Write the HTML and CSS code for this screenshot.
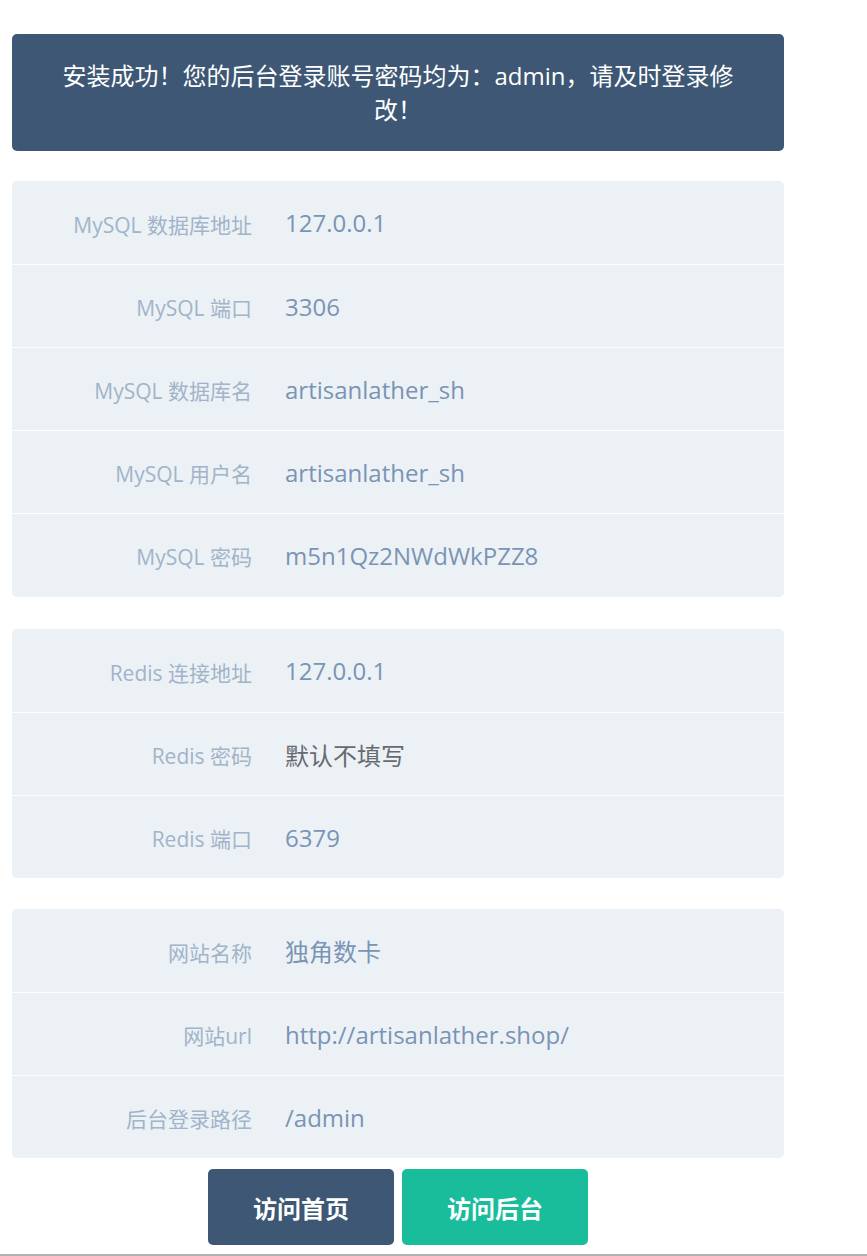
FILE: index.html
```html
<!DOCTYPE html>
<html lang="zh-CN">
<head>
<meta charset="utf-8">
<title>安装成功</title>
<link rel="stylesheet" href="styles.css">
</head>
<body>
<div class="wrap">
  <div class="banner">安装成功！您的后台登录账号密码均为：admin，请及时登录修改！</div>

  <div class="card card-mysql">
    <div class="row"><div class="label">MySQL 数据库地址</div><div class="value">127.0.0.1</div></div>
    <div class="row"><div class="label">MySQL 端口</div><div class="value">3306</div></div>
    <div class="row"><div class="label">MySQL 数据库名</div><div class="value">artisanlather_sh</div></div>
    <div class="row"><div class="label">MySQL 用户名</div><div class="value">artisanlather_sh</div></div>
    <div class="row"><div class="label">MySQL 密码</div><div class="value">m5n1Qz2NWdWkPZZ8</div></div>
  </div>

  <div class="card card-redis">
    <div class="row"><div class="label">Redis 连接地址</div><div class="value">127.0.0.1</div></div>
    <div class="row"><div class="label">Redis 密码</div><div class="value muted">默认不填写</div></div>
    <div class="row"><div class="label">Redis 端口</div><div class="value">6379</div></div>
  </div>

  <div class="card card-site">
    <div class="row"><div class="label">网站名称</div><div class="value">独角数卡</div></div>
    <div class="row"><div class="label">网站url</div><div class="value">http://artisanlather.shop/</div></div>
    <div class="row"><div class="label">后台登录路径</div><div class="value">/admin</div></div>
  </div>

  <div class="actions">
    <a class="btn btn-dark" href="#">访问首页</a>
    <a class="btn btn-teal" href="#">访问后台</a>
  </div>
</div>
<div class="bottom-rule"></div>
</body>
</html>
```

FILE: styles.css
```css
html, body {
  margin: 0;
  padding: 0;
  background: #ffffff;
}
body {
  font-family: "Open Sans", "Noto Sans CJK SC", sans-serif;
}
.wrap {
  width: 772px;
  margin: 34px 0 0 12px;
  display: flex;
  flex-direction: column;
}
.banner {
  background: #3d5775;
  color: #ffffff;
  border-radius: 5px;
  font-size: 24px;
  line-height: 34px;
  text-align: center;
  padding: 25px 40px 24px;
  margin-bottom: 30px;
}
.card {
  background: #ecf1f6;
  border-radius: 5px;
  overflow: hidden;
}
.card-mysql {
  margin-bottom: 32px;
  padding-bottom: 1px;
}
.card-redis {
  margin-bottom: 31px;
}
.card-site {
  margin-bottom: 11px;
}
.row {
  height: 83px;
  box-sizing: border-box;
  display: flex;
  align-items: center;
  border-top: 1px solid #ffffff;
}
.row:first-child {
  border-top: none;
}
.label {
  width: 240px;
  text-align: right;
  font-size: 21px;
  color: #a1b4c9;
  flex: none;
  padding-top: 2px;
}
.value {
  padding-left: 33px;
  font-size: 24px;
  color: #7a94b5;
}
.value.muted {
  color: #666a6e;
}
.actions {
  display: flex;
  justify-content: center;
  gap: 8px;
}
.btn {
  width: 186px;
  height: 76px;
  border-radius: 5px;
  display: flex;
  align-items: center;
  justify-content: center;
  color: #ffffff;
  font-size: 24px;
  font-weight: 700;
  text-decoration: none;
  font-family: "Noto Sans CJK SC", sans-serif;
}
.btn-dark {
  background: #3d5775;
}
.btn-teal {
  background: #19bc9b;
}
.bottom-rule {
  height: 2px;
  background: #b3b3b3;
  margin-top: 9px;
}
```
